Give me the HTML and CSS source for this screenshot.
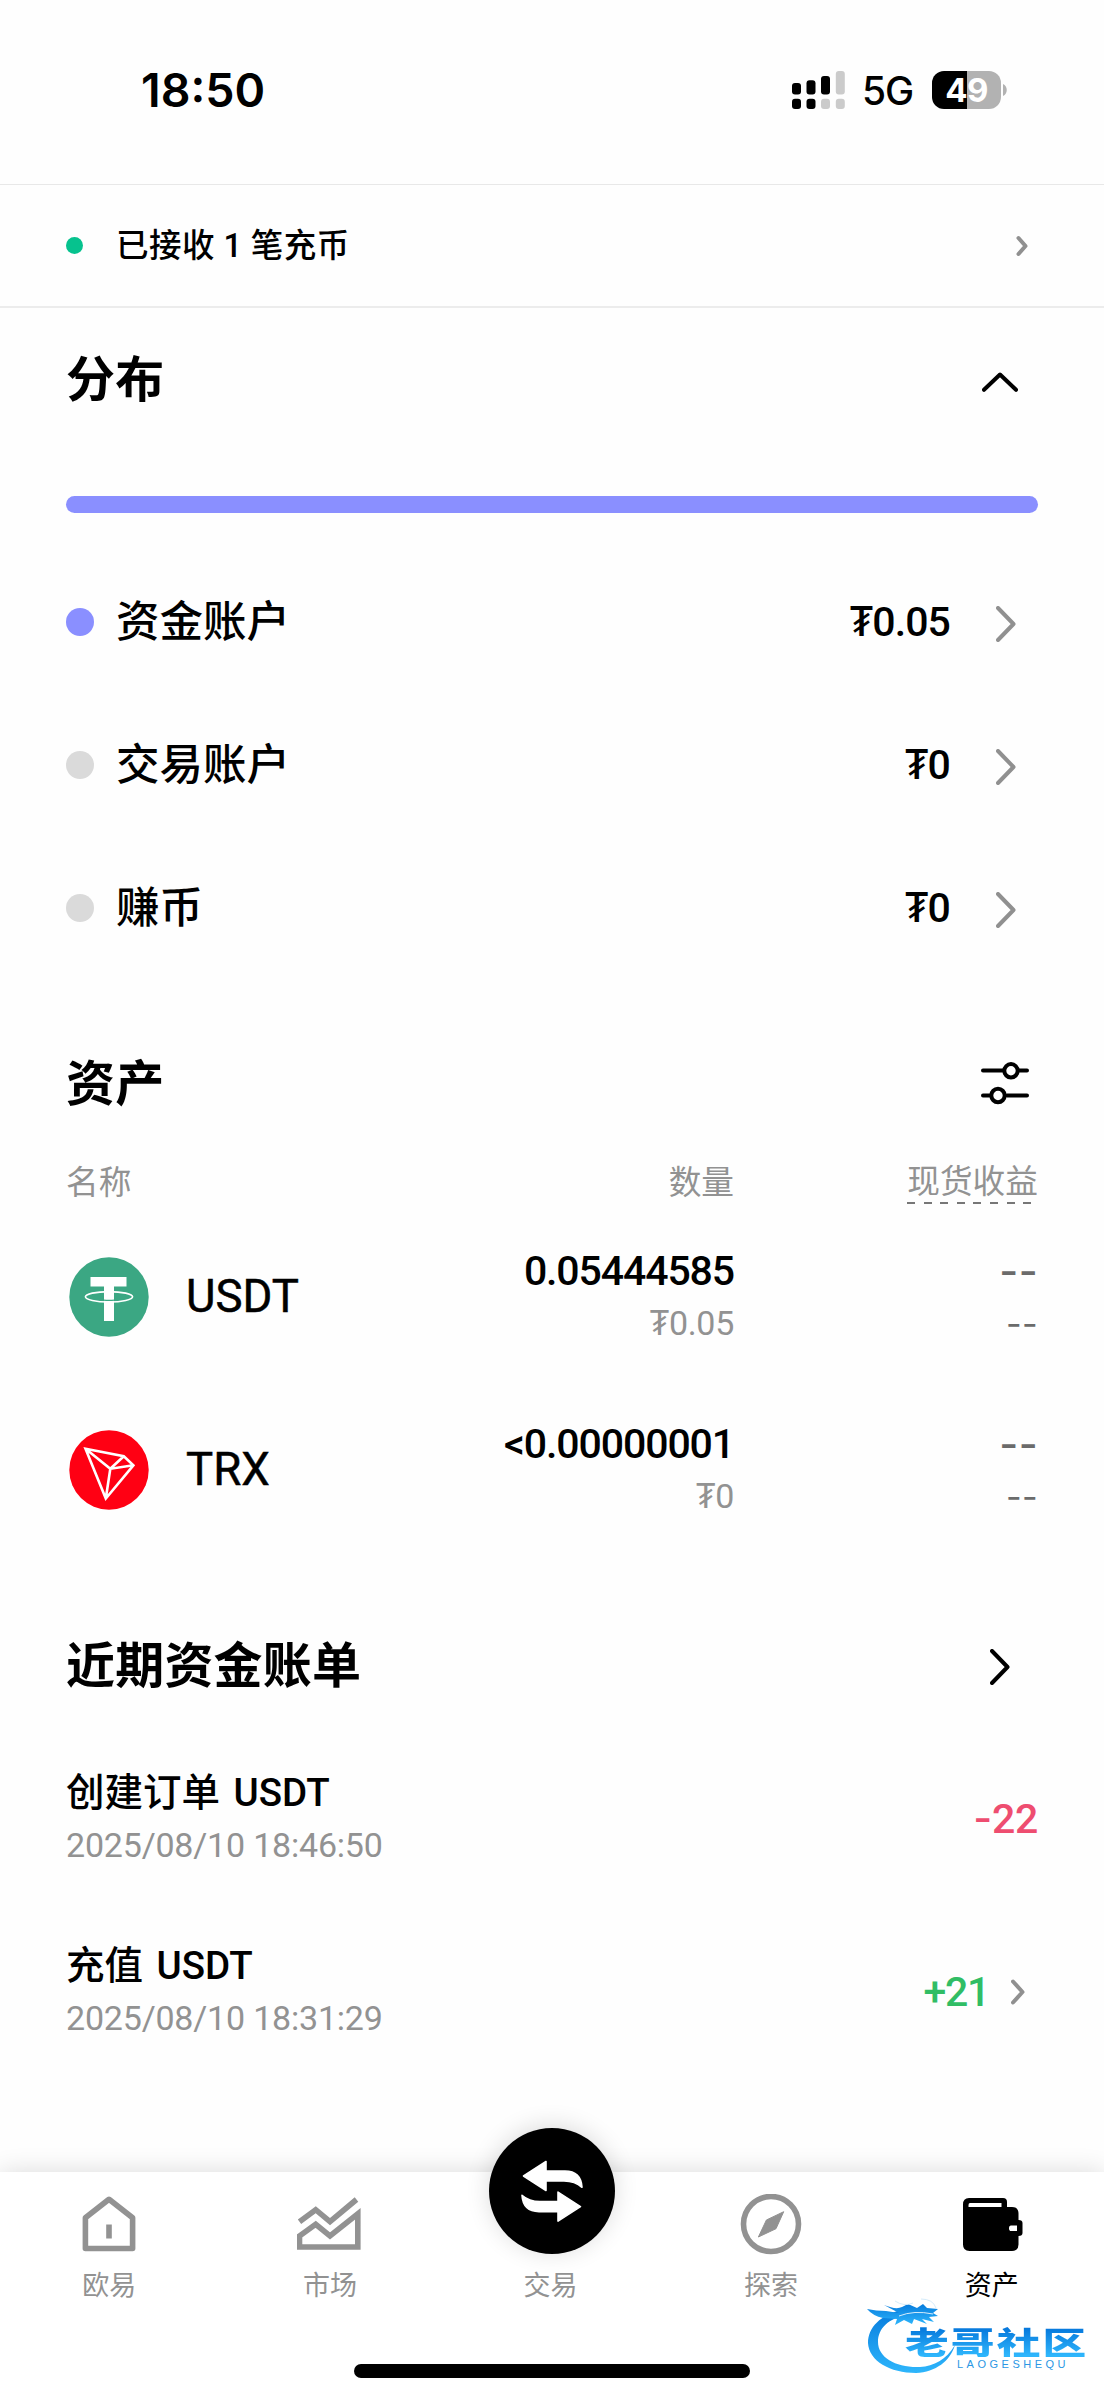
FILE: index.html
```html
<!DOCTYPE html>
<html lang="zh-CN">
<head>
<meta charset="utf-8">
<title>资产</title>
<link rel="stylesheet" href="styles.css">
</head>
<body>
<div class="screen">
  <header class="status">
    <span class="clock">18:50</span>
    <div class="status-right">
      <svg class="signal" width="53" height="38" viewBox="0 0 53 38">
        <rect x="0" y="12" width="9" height="11.4" rx="3"/><rect x="14.5" y="9.3" width="9" height="14.1" rx="3"/><rect x="29" y="5" width="9" height="18.4" rx="3"/>
        <rect x="0" y="27.7" width="9" height="10.3" rx="3"/><rect x="14.5" y="27.7" width="9" height="10.3" rx="3"/>
        <g fill="#cbcbcb"><rect x="43.8" y="0" width="9" height="23.4" rx="3"/><rect x="29" y="27.7" width="9" height="10.3" rx="3"/><rect x="43.8" y="27.7" width="9" height="10.3" rx="3"/></g>
      </svg>
      <span class="network">5G</span>
      <span class="battery">49</span>
      <svg class="nub" width="4" height="12" viewBox="0 0 4 12"><path d="M0 0C5 2 5 10 0 12Z" fill="#b2b2b2"/></svg>
    </div>
  </header>

  <div class="notice">
    <i class="notice-dot"></i>
    <span class="notice-text">已接收 1 笔充币</span>
    <svg class="notice-arrow" width="12" height="22" viewBox="0 0 12 22"><path class="line grey" d="M2.5 3l7 8-7 8"/></svg>
  </div>

  <main>
    <section>
      <div class="heading"><h2>分布</h2>
        <svg class="up" width="36" height="20" viewBox="0 0 36 20"><path class="line" d="M2 17.8L18 2.5l16 15.3"/></svg></div>
      <div class="bar"></div>
      <div class="account"><i class="dot active"></i><span class="account-name">资金账户</span><span class="value">₮0.05</span>
        <svg class="next" width="20" height="36" viewBox="0 0 20 36"><path class="line grey" d="M2 2l15.500 16L2 34"/></svg></div>
      <div class="account"><i class="dot"></i><span class="account-name">交易账户</span><span class="value">₮0</span>
        <svg class="next" width="20" height="36" viewBox="0 0 20 36"><path class="line grey" d="M2 2l15.500 16L2 34"/></svg></div>
      <div class="account"><i class="dot"></i><span class="account-name">赚币</span><span class="value">₮0</span>
        <svg class="next" width="20" height="36" viewBox="0 0 20 36"><path class="line grey" d="M2 2l15.500 16L2 34"/></svg></div>
    </section>

    <section class="assets">
      <div class="heading"><h2>资产</h2>
        <svg class="filter" width="48" height="44" viewBox="0 0 48 44"><path class="line" d="M2 9.500h20M38 9.500h8M2 34.500h7M26 34.500h20"/><circle class="line" cx="30" cy="9.800" r="6.700"/><circle class="line" cx="17" cy="34.500" r="6.700"/></svg></div>
      <div class="cols columns"><span>名称</span><span>数量</span><span class="pnl">现货收益</span></div>
      <div class="cols asset">
        <div class="coin">
          <svg width="80" height="80" viewBox="0 0 80 80"><circle cx="40" cy="40" r="39.700" fill="#3ba783"/><path d="M21.500 20h36v9.500H45V64H35V29.500H21.500Z" fill="#fff"/><ellipse cx="40" cy="39.800" rx="23.600" ry="5.200" fill="none" stroke="#fff" stroke-width="1.600"/><path d="M34.500 43.200q5.500 .5 11 0" fill="none" stroke="#3ba783" stroke-width="1.300"/></svg>
          <span>USDT</span></div>
        <div class="pair"><b>0.05444585</b><small>₮0.05</small></div>
        <div class="pair empty"><b>--</b><small>--</small></div>
      </div>
      <div class="cols asset">
        <div class="coin">
          <svg width="80" height="80" viewBox="0 0 80 80"><circle cx="40" cy="40" r="39.700" fill="#ff0013"/><path d="M16.500 18.800L54.800 26.200 64.400 35.300 36.800 68.500ZM16.500 18.800L41.300 38.800 54.800 26.200M64.400 35.300L41.300 38.800 36.800 68.500" fill="none" stroke="#fff" stroke-width="2.600"/></svg>
          <span>TRX</span></div>
        <div class="pair"><b>&lt;0.00000001</b><small>₮0</small></div>
        <div class="pair empty"><b>--</b><small>--</small></div>
      </div>
    </section>

    <section class="bills">
      <div class="heading"><h2>近期资金账单</h2>
        <svg class="more" width="20" height="36" viewBox="0 0 20 36"><path class="line" d="M2 2l15.500 16L2 34"/></svg></div>
      <div class="bill"><div class="bill-info"><span class="bill-title">创建订单 USDT</span><span class="bill-date">2025/08/10 18:46:50</span></div>
        <span class="amount out"><i>-</i>22</span></div>
      <div class="bill"><div class="bill-info"><span class="bill-title">充值 USDT</span><span class="bill-date">2025/08/10 18:31:29</span></div>
        <span class="amount in">+21</span>
        <svg class="bill-arrow" width="14" height="26" viewBox="0 0 14 26"><path class="line grey" d="M2 2.500l9.500 10.500L2 23.500"/></svg></div>
    </section>
  </main>

  <nav class="tabs">
    <a class="tab"><svg width="66" height="66" viewBox="0 0 66 66"><path class="tab-line" d="M9.400 23.800L33 5.300 56.600 23.800V54.500H9.400Z"/><path d="M33 30.500v14" class="tab-line"/></svg><span>欧易</span></a>
    <a class="tab"><svg width="66" height="66" viewBox="0 0 66 66"><path class="tab-line miter" d="M2.500 27.700L18.700 15.700 33 27.700 59.500 5.500"/><path class="tab-line miter" d="M2.500 42L18.700 30.300 33 42 60.800 19.800V53H2.500Z"/></svg><span>市场</span></a>
    <a class="tab"><span>交易</span></a>
    <a class="tab"><svg width="66" height="66" viewBox="0 0 66 66"><circle class="tab-line" cx="33" cy="30" r="27.500"/><path d="M45.700 17.700L38 34.700 20.400 43 28.400 26Z" fill="#929292" stroke="#929292" stroke-linejoin="round"/></svg><span>探索</span></a>
    <a class="tab current"><svg width="66" height="66" viewBox="0 0 66 66"><path transform="translate(0 -2)" fill-rule="evenodd" d="M10 6h34q4 0 4 4v5h5q6.500 0 6.500 6.500V28q4 0 4 3v10q0 3-4 3v8.500q0 6.500-6.500 6.500H10.500Q4 59 4 52.500V12.500Q4 6 10 6ZM11 11q-1.500 0-1.500 2v2h33v-4ZM52 33.500q-2 0-2 2.800t2 2.800h6v-5.600Z"/></svg><span>资产</span></a>
    <div class="swap"><svg width="126" height="126" viewBox="0 0 126 126"><g id="half"><path d="M34.500 48L57 33.500V43H76Q92 43 93 59.300Q86 53 75 53H57V62.500Z" fill="#fff" stroke="#fff" stroke-width="1.600" stroke-linejoin="round"/></g><use href="#half" transform="rotate(180 63 63.300)"/></svg></div>
    <div class="home-indicator"></div>
  </nav>

  <div class="brand">
    <svg width="100" height="80" viewBox="0 0 100 80">
      <defs><linearGradient id="sky" x1="0" y1="0" x2="0" y2="1"><stop offset="0" stop-color="#077bdc"/><stop offset="1" stop-color="#2eb6fc"/></linearGradient></defs>
      <g fill="url(#sky)"><path d="M35 15C15 20 2 32 2 48C3 66 24 78 50 78C70 77 84 66 89 50C80 65 68 71 54 72C31 73 12 63 12 47C12 33 23 24 39 20Z"/>
      <path d="M1 14Q10 16 20 16L33 18 18 10Q30 15 36 12L42 9 51 13 57 9 61 13 72 14 67 18 72 21 63 22 68 27 56 24 61 29 48 24 46 29 38 25 29 30 31 24 17 23Q7 21 1 14Z"/></g>
      <path d="M29 6Q38 12 47 8M55 4Q67 4 70 13M33 21q15-6 34-2" fill="none" stroke="#d5ecfb" stroke-width="1"/>
    </svg>
    <div class="brand-words"><span class="brand-name">老哥社区</span><span class="brand-latin">LAOGESHEQU</span></div>
  </div>
</div>
</body>
</html>
```
FILE: styles.css
```css
* { box-sizing: border-box; }
body { margin: 0; background: #fefefe; color: #000; font-family: Roboto, "Noto Sans CJK SC", "Noto Sans", sans-serif; }
svg { display: block; flex: none; }
i { font-style: normal; }
.screen { position: relative; width: 1104px; height: 2400px; display: flex; flex-direction: column; overflow: hidden; }
.line { fill: none; stroke: #000; stroke-width: 4; stroke-linecap: round; stroke-linejoin: round; }
.line.grey { stroke: #909090; }

.status { height: 184px; padding: 0 97px 5px 141px; display: flex; align-items: center; justify-content: space-between; font-family: Inter, sans-serif; }
.clock { font-size: 46.500px; font-weight: 600; line-height: 56px; }
.status-right { display: flex; align-items: center; }
.network { width: 51px; margin-left: 17px; margin-right: 1px; font-size: 39px; font-weight: 500; line-height: 38px; letter-spacing: -1px; padding-top: 3px; }
.battery { width: 69px; height: 38px; margin-left: 18px; border-radius: 12px; background: linear-gradient(90deg, #000 50%, #b2b2b2 50%); color: #fff; font-size: 33px; font-weight: 700; line-height: 39px; letter-spacing: -.5px; text-align: center; }
.nub { margin-left: 2px; }

.notice { height: 124px; border-top: 1px solid #e8e8e8; border-bottom: 2px solid #ececec; padding: 0 76px 0 66px; display: flex; align-items: center; }
.notice-dot { width: 17px; height: 17px; border-radius: 50%; background: #06c28e; }
.notice-text { margin-left: 33px; font-size: 32.500px; font-weight: 500; line-height: 40px; letter-spacing: .45px; }
.notice-arrow { margin-left: auto; }

main { padding: 0 66px; }
.heading { height: 142px; display: flex; align-items: center; justify-content: space-between; }
h2 { margin: 0; padding-top: 4px; font-size: 49px; font-weight: 700; line-height: 60px; letter-spacing: .2px; }
.up { margin: 6px 20px 0 0; }
.bar { height: 17px; margin: 46px 0 37px; border-radius: 9px; background: #8a8fff; }
.account { height: 143px; display: flex; align-items: center; }
.dot { width: 28px; height: 28px; border-radius: 50%; background: #dadada; }
.dot.active { background: #8a8fff; }
.account-name { margin-left: 22px; padding-top: 3px; font-size: 43.500px; font-weight: 500; line-height: 50px; }
.value { margin-left: auto; font-size: 41px; font-weight: 500; letter-spacing: -.9px; line-height: 48px; }
.next { margin: 4px 22px 0 46px; }

.assets { margin-top: 33px; }
.filter { margin: 0 9px 0 0; }
.cols { display: grid; grid-template-columns: 1fr 300px 304px; align-items: center; }
.columns { height: 56px; font-size: 32.700px; line-height: 40px; color: #929292; }
.columns > :not(.pnl) { padding-top: 2px; }
.columns > :not(:first-child) { justify-self: end; }
.pnl { position: relative; }
.pnl::after { content: ""; position: absolute; left: 0; right: 0; bottom: -2px; height: 2px; background: repeating-linear-gradient(90deg, #777 0 8px, transparent 8px 16.600px); }
.asset { height: 173px; }
.coin { display: flex; align-items: center; padding: 1px 0 0 3px; font-size: 45.500px; font-weight: 400; -webkit-text-stroke: .5px #000; }
.coin span { margin-left: 37px; line-height: 54px; }
.pair { display: flex; flex-direction: column; align-items: flex-end; padding-top: 1px; }
.pair b { font-size: 41px; font-weight: 500; letter-spacing: -1.100px; line-height: 52px; }
.pair small { font-size: 34px; line-height: 53px; letter-spacing: -.3px; color: #929292; }
.empty b, .empty small { font-family: Inter, sans-serif; color: #6b6b6b; }
.empty b { letter-spacing: .4px; }
.empty small { letter-spacing: .4px; }

.bills { margin-top: 43px; }
.bills .heading { height: 132px; }
.more { margin: 3px 28px 0 0; }
.bill { height: 173px; display: flex; align-items: center; padding-top: 2px; }
.bill-info { display: flex; flex-direction: column; margin-right: auto; }
.bill-title { font-size: 38.500px; font-weight: 500; line-height: 53px; word-spacing: 4px; }
.bill-date { font-size: 34px; line-height: 53px; letter-spacing: -.2px; color: #929292; }
.amount { font-size: 41px; font-weight: 500; line-height: 48px; letter-spacing: -.3px; }
.amount i { font-family: Inter, sans-serif; }
.out { color: #ee4d70; }
.in { color: #31bd65; letter-spacing: -1.300px; }
.bill-arrow { margin: 0 13px 0 22px; }

.tabs { position: relative; height: 228px; margin-top: auto; padding-right: 1px; display: flex; background: #fff; box-shadow: 0 0 24px rgba(0, 0, 0, .14); }
.tab { position: relative; left: -1px; flex: 1; height: 136px; padding-top: 22px; display: flex; flex-direction: column; align-items: center; justify-content: space-between; font-size: 27px; line-height: 44px; color: #929292; }
.tab > span { margin-top: auto; }
.tab-line { fill: none; stroke: #929292; stroke-width: 5.600; stroke-linejoin: round; }
.tab-line.miter { stroke-linejoin: miter; }
.current { color: #000; }
.swap { position: absolute; left: 489px; top: -44px; width: 126px; height: 126px; border-radius: 50%; background: #000; box-shadow: 0 -2px 24px rgba(0, 0, 0, .14); }
.home-indicator { position: absolute; left: 354px; top: 192px; width: 396px; height: 14px; border-radius: 7px; background: #000; }

.brand { position: absolute; left: 866px; top: 2295px; width: 222px; height: 80px; }
.brand-words { position: absolute; left: 39px; top: 30px; display: flex; flex-direction: column; }
.brand-name { align-self: flex-start; font-family: "Noto Sans CJK SC", sans-serif; font-size: 31px; font-weight: 900; line-height: 32px; letter-spacing: 1.500px; transform: scaleX(1.410); transform-origin: left; background: linear-gradient(#0678dc 10%, #2eb6fc 95%); -webkit-background-clip: text; background-clip: text; color: transparent; }
.brand-latin { margin: 1px 0 0 52px; font-family: "Liberation Sans", sans-serif; font-size: 11px; font-weight: 400; line-height: 12px; letter-spacing: 3.500px; color: #2b97e4; }
```
